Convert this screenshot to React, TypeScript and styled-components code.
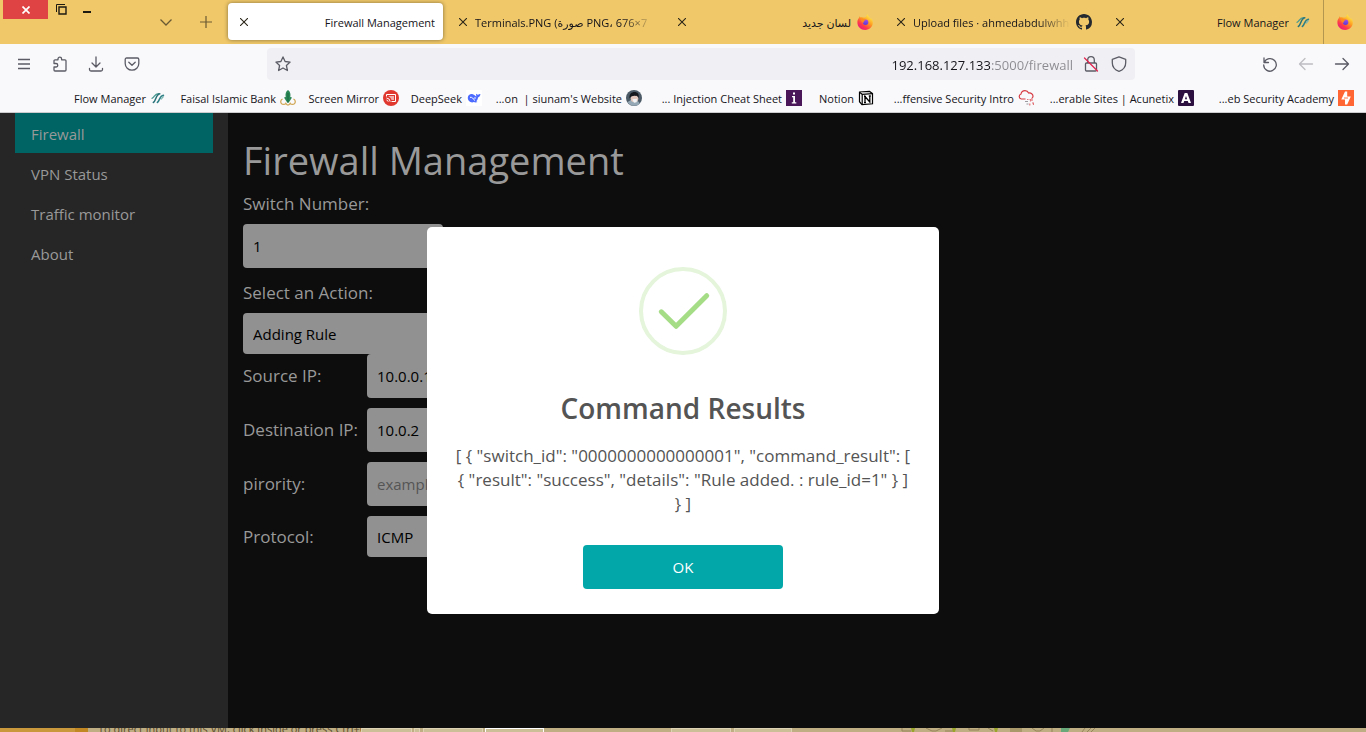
import React from "react";
import styled, { createGlobalStyle, css } from "styled-components";

const GlobalStyle = createGlobalStyle`
  *, *::before, *::after { box-sizing: border-box; }
  body {
    margin: 0;
    background: #0d0d0d;
    font-family: "Open Sans", "Noto Sans", "DejaVu Sans", sans-serif;
  }
  button, input, select { font: inherit; }
  a { color: inherit; text-decoration: none; }
  svg { display: block; flex: none; }
`;

const Page = styled.div`
  display: flex;
  flex-direction: column;
  min-height: 100vh;
`;

/* ---------- Browser chrome ---------- */

const TabStrip = styled.div`
  display: flex;
  height: 44px;
  background: #f0c869;
  color: #15141a;
`;

const WindowControls = styled.div`
  display: flex;
  align-items: flex-start;
  padding-left: 3px;
`;

const WindowButton = styled.button<{ $danger?: boolean }>`
  display: flex;
  align-items: center;
  justify-content: center;
  width: ${(p) => (p.$danger ? 45 : 26)}px;
  height: 19px;
  padding: 0;
  border: 0;
  background: ${(p) => (p.$danger ? "#e04343" : "transparent")};
`;

const StripActions = styled.div`
  display: flex;
  flex: 1;
  justify-content: flex-end;
  padding-right: 2px;
`;

const StripButton = styled.button`
  display: flex;
  align-items: center;
  justify-content: center;
  width: 40px;
  padding: 0;
  border: 0;
  background: transparent;
`;

const Tab = styled.div<{ $active?: boolean }>`
  display: flex;
  align-items: center;
  flex: 0 1 215px;
  min-width: 0;
  height: 37px;
  margin: 3px 4px 4px 0;
  padding: 0 8px 0 12px;
  border-radius: 4px;
  font-size: 11px;
  ${(p) =>
    p.$active &&
    css`
      background: #fff;
      box-shadow: 0 0 4px rgba(0, 0, 0, 0.45);
    `}
`;

const TabClose = styled.button`
  flex: none;
  width: 8px;
  height: 8px;
  padding: 0;
  border: 0;
  background: transparent;
`;

const TabTitle = styled.span<{ $fade?: boolean }>`
  flex: 1;
  min-width: 0;
  margin-left: 8px;
  padding-top: 2px;
  overflow: hidden;
  white-space: nowrap;
  text-align: ${(p) => (p.$fade ? "left" : "right")};
  ${(p) =>
    p.$fade &&
    css`
      mask-image: linear-gradient(to left, transparent, #000 32px);
    `}
`;

const TabIcon = styled.span`
  margin-left: 6px;
`;

const PinnedTab = styled.button`
  display: flex;
  align-items: center;
  justify-content: center;
  width: 43px;
  padding: 0;
  border: 0;
  border-left: 1px solid #b39650;
  background: transparent;
`;

const Toolbar = styled.div`
  display: flex;
  align-items: center;
  height: 40px;
  padding: 0 6px;
  background: #f9f9fb;
`;

const ToolButton = styled.button`
  display: flex;
  align-items: center;
  justify-content: center;
  width: 36px;
  height: 32px;
  padding: 0;
  border: 0;
  background: transparent;
  color: #5b5b66;

  &:disabled {
    color: #bdbdc2;
  }
`;

const UrlBar = styled.div`
  display: flex;
  align-items: center;
  flex: 1;
  height: 32px;
  margin: 0 117px;
  padding: 0 8px;
  border-radius: 4px;
  background: #f0f0f4;
  color: #5b5b66;
`;

/* The host is dark, the port and path (the last 83px) are grey. */
const UrlInput = styled.input`
  flex: 1;
  min-width: 0;
  margin: 0 10px;
  padding: 2px 0 0;
  border: 0;
  outline: 0;
  font-size: 13px;
  text-align: right;
  color: #15141a;
  background: linear-gradient(to left, #8a8a90 83px, #15141a 83px);
  background-clip: text;
  -webkit-background-clip: text;
  -webkit-text-fill-color: transparent;
`;

const UrlIcons = styled.div`
  display: flex;
  gap: 12px;
`;

const Bookmarks = styled.nav`
  display: flex;
  justify-content: flex-end;
  height: 29px;
  padding-right: 12px;
  border-bottom: 1px solid #cccccf;
  background: #f9f9fb;
  color: #15141a;
  font-size: 11px;
`;

const Bookmark = styled.a<{ $width: number }>`
  display: flex;
  align-items: center;
  justify-content: flex-end;
  gap: 4px;
  width: ${(p) => p.$width}px;
  white-space: pre;
`;

/* ---------- Web page ---------- */

const Body = styled.div`
  position: relative;
  display: flex;
  flex: 1;
`;

const Sidebar = styled.nav`
  flex: 0 0 228px;
  padding: 0 15px;
  background: #262626;
`;

const SideLink = styled.a<{ $active?: boolean }>`
  display: block;
  padding: 2px 16px 0;
  font-size: 15px;
  line-height: 38px;
  color: #999;
  background: ${(p) => (p.$active ? "#006464" : "transparent")};
`;

const Content = styled.main`
  flex: 1;
  padding: 23px 15px;
  background: #0d0d0d;
  color: #999;
`;

const Heading = styled.h1`
  margin: 0 0 8px;
  font-size: 38px;
  font-weight: 400;
  line-height: 48px;
`;

const Field = styled.div`
  width: 200px;
  margin-bottom: 13px;

  &:last-of-type {
    margin-bottom: 0;
  }
`;

const Label = styled.label`
  display: block;
  font-size: 17px;
  line-height: 24px;
  white-space: nowrap;
`;

const StackedLabel = styled(Label)`
  margin-bottom: 8px;
`;

const control = css`
  display: block;
  width: 100%;
  padding: 0 10px;
  border: 0;
  border-radius: 4px;
  background: #919191;
  color: #000;
  font-size: 15px;
`;

const TextInput = styled.input`
  ${control}
  height: 44px;

  &::placeholder {
    color: #555;
  }
`;

const Select = styled.select`
  ${control}
  appearance: none;
  height: 41px;
`;

const RuleForm = styled.form`
  display: grid;
  grid-template-columns: 124px 200px;
  row-gap: 10px;
  align-items: center;
`;

const Overlay = styled.div`
  position: absolute;
  inset: 0;
  display: flex;
  align-items: center;
  justify-content: center;
`;

const Dialog = styled.section`
  display: flex;
  flex-direction: column;
  align-items: center;
  width: 512px;
  max-width: 90%;
  padding: 40px 28px 25px;
  border-radius: 5px;
  background: #fff;
  color: #545454;
  text-align: center;
`;

const DialogTitle = styled.h2`
  margin: 33px 0 16px;
  font-size: 28px;
  font-weight: 600;
  line-height: 40px;
`;

const DialogText = styled.p`
  margin: 0 0 29px;
  font-size: 17px;
  line-height: 24px;
`;

const OkButton = styled.button`
  width: 200px;
  height: 44px;
  padding: 0;
  border: 0;
  border-radius: 4px;
  background: #02a7a9;
  color: #fff;
  font-size: 15px;
`;

/* ---------- Host status strip ---------- */

const StatusStrip = styled.footer`
  display: flex;
  height: 4px;
  overflow: hidden;
  background: #bfae84;
`;

const StripAccent = styled.div`
  width: 88px;
  background: linear-gradient(to right, #c9973c 75px, #c08722 75px);
`;

const StripHint = styled.div`
  width: 273px;
  height: 4px;
  padding-left: 10px;
  color: #5b4a2c;
  font-size: 11px;
  line-height: 1px;
  white-space: nowrap;
`;

const StripCell = styled.div<{ $width: number; $gap?: number; $bright?: boolean }>`
  width: ${(p) => p.$width}px;
  margin-left: ${(p) => p.$gap ?? 2}px;
  border: 1px solid ${(p) => (p.$bright ? "#fff" : "#ddd3b4")};
  border-bottom: 0;
  background: #cbbf98;
`;

const StripDrawing = styled.svg`
  margin-left: 108px;
`;

/* ---------- Icons ---------- */

const stroke = {
  fill: "none",
  stroke: "currentColor",
  strokeWidth: 1.3,
  strokeLinecap: "round" as const,
  strokeLinejoin: "round" as const,
};

const Icon = ({ children, size = 16 }: { children: React.ReactNode; size?: number }) => (
  <svg width={size} height={size} viewBox="0 0 16 16" {...stroke} aria-hidden="true">
    {children}
  </svg>
);

const CloseGlyph = () => (
  <svg width="8" height="8" viewBox="0 0 8 8" fill="none" stroke="#2b2518" strokeWidth="1.1">
    <path d="M0 0l8 8M8 0L0 8" />
  </svg>
);

const Firefox = () => (
  <svg width="16" height="16" viewBox="0 0 16 16">
    <defs>
      <linearGradient id="fx-body" x1="0.85" y1="0.1" x2="0.2" y2="1">
        <stop offset="0" stopColor="#fff04a" />
        <stop offset="0.4" stopColor="#ff9a1f" />
        <stop offset="0.7" stopColor="#ff3b47" />
        <stop offset="1" stopColor="#e3148b" />
      </linearGradient>
      <linearGradient id="fx-globe" x1="0.6" y1="0" x2="0.4" y2="1">
        <stop offset="0" stopColor="#a24bf0" />
        <stop offset="1" stopColor="#5a3ad2" />
      </linearGradient>
    </defs>
    <path
      fill="url(#fx-body)"
      d="M10.6.2c.2 1.500 1 2.100 2 3.200.500.500.900 1 1.200 1.600.200-.300.200-.700.100-1.100 1.200 1.200 1.900 2.900 1.900 4.700C15.800 12.800 12.400 16 8.200 16 3.800 16 .400 12.700.400 8.500c0-2 .6-3.400 1.700-4.700.100-.7.300-1.200.7-1.600.1.500.4.900.8 1.200.7-.2 1.500-.2 2.300.1C6.800 3.600 8 3.400 9 3c.3-1.100.8-2 1.600-2.800z"
    />
    <circle cx="8.600" cy="8.200" r="2.700" fill="url(#fx-globe)" />
    <path fill="#ff8a20" d="M3.500 5.200c1.300-.7 2.600-.6 3.700 0 .4.200 1 .3 1.700.4-.2.700-1 .9-1.700 1.300-.5.300-.5 1-.3 1.500-1 .3-2.100-.3-2.500-1.200-.2-.5-.5-1.400-.9-2z" />
  </svg>
);

const Github = () => (
  <svg width="16" height="16" viewBox="0 0 16 16" fill="#24292f">
    <path d="M8 0C3.580 0 0 3.580 0 8c0 3.540 2.290 6.530 5.470 7.590.4.070.55-.17.55-.38 0-.19-.010-.820-.010-1.490-2.010.370-2.530-.490-2.690-.940-.090-.230-.480-.940-.820-1.130-.280-.150-.680-.520-.010-.530.630-.010 1.080.580 1.230.820.720 1.210 1.870.870 2.330.660.070-.520.280-.870.510-1.070-1.780-.2-3.640-.89-3.640-3.950 0-.87.31-1.590.82-2.150-.08-.2-.36-1.020.08-2.120 0 0 .67-.21 2.200.820.640-.180 1.320-.270 2-.270s1.360.090 2 .270c1.530-1.040 2.200-.820 2.200-.820.440 1.100.160 1.920.080 2.120.510.560.820 1.270.820 2.150 0 3.070-1.870 3.750-3.650 3.950.290.250.540.730.540 1.480 0 1.070-.010 1.930-.010 2.200 0 .210.150.460.550.380A8.010 8.010 0 0 0 16 8c0-4.420-3.580-8-8-8z" />
  </svg>
);

const FlowMark = () => (
  <svg width="16" height="16" viewBox="0 0 16 16" fill="none" strokeLinecap="round">
    <path d="M2 8.300C4.800 7.500 4.200 3.800 8.500 3.600" stroke="#4b9a92" strokeWidth="1.300" />
    <path d="M3.300 12.500C6.300 11 5.500 4.600 9.800 3.800" stroke="#2a7378" strokeWidth="1.500" />
    <path d="M7.300 12.500c2.600-1.500 1.900-6.600 6.200-7.200" stroke="#2f8086" strokeWidth="1.500" />
    <path d="M11.500 9c.5-1 .9-1.800 2-2.200" stroke="#7fb8b2" strokeWidth="1.200" />
  </svg>
);

const FaisalMark = () => (
  <svg width="16" height="16" viewBox="0 0 16 16" fill="none">
    <path d="M8 0c2.300 1.500 2.800 4 2.300 7l1.700.5-2.500 4L8 13l-1.500-1.500-2.500-4L5.700 7C5.200 4 5.700 1.500 8 0z" fill="#2b8655" />
    <path d="M2.600 9a2.800 2.800 0 1 0 3.200 4.300c1 2.300 3.400 2.300 4.400 0A2.800 2.800 0 1 0 13.400 9" stroke="#d2a95a" strokeWidth="1.300" />
    <path d="M8 3v9.500" stroke="#1d6d43" strokeWidth="1.200" />
  </svg>
);

const MirrorMark = () => (
  <svg width="16" height="16" viewBox="0 0 16 16" fill="none">
    <circle cx="8" cy="8" r="8" fill="#e0382f" />
    <path d="M3.500 6.500v-2h9v7H8.500" stroke="#fff" strokeWidth="1" />
    <path d="M3.500 8a4 4 0 0 1 3.700 3.700M3.500 10a2 2 0 0 1 1.700 1.700" stroke="#fff" strokeWidth="1" />
    <path d="M5.500 6h5.500v4H8.500C8 8 7 7 5.500 6.500z" fill="#fff" opacity="0.6" />
  </svg>
);

const DeepSeekMark = () => (
  <svg width="16" height="16" viewBox="0 0 16 16">
    <path fill="#fff" d="M0 0h16v16H0z" />
    <path
      fill="#4d6bfe"
      d="M1.800 7.500c.2-2.800 2.800-4 5-3.300 1.600.5 2.300 1.500 3.500 2.200.2-1-.5-1.500-.3-2.700.8.400 1.300 1 2 1.100.9 0 1.400-.7 2.400-.7-.1 1.900-1 3-2.400 3.300-.2 1.700-.8 2.900-1.800 3.800l1.300.9c-1.500.6-2.700.4-3.700 0C4.800 13.200 1.600 11 1.800 7.500z"
    />
    <path d="M4 7.300c2-.4 3.500 1.200 4.600 3.300" fill="none" stroke="#fff" strokeWidth="1" />
    <circle cx="9" cy="8" r="0.800" fill="#fff" />
  </svg>
);

const AvatarMark = () => (
  <svg width="16" height="16" viewBox="0 0 16 16">
    <circle cx="8" cy="8" r="8" fill="#4b5a66" />
    <path d="M1.500 12A8 8 0 0 0 14 13.500L11 10H5z" fill="#94a8b5" />
    <circle cx="8.500" cy="8.500" r="3.800" fill="#e2c8bd" />
    <path d="M3.500 8.500C3 4 5.500 2 8.500 2s5 2 4 6c-1-2.500-2-2-4-2.300C6.500 6 5 6 3.500 8.500z" fill="#16191e" />
    <path d="M6.300 9.200l4.800-.4-.6 3.400-2.500.5z" fill="#f1f4f7" />
  </svg>
);

const InviMark = () => (
  <svg width="16" height="16" viewBox="0 0 16 16">
    <path fill="#4a1859" d="M0 0h16v16H0z" />
    <path fill="#fff" d="M7 2.600h2v2H7zM6 6h3v6.200h1.300v1.200H5.800v-1.200h1.400V7.200H6z" />
  </svg>
);

const NotionMark = () => (
  <svg width="16" height="16" viewBox="0 0 16 16" fill="#fff" stroke="#000">
    <path d="M1.500 2.200L11.500 1.400l3 2.200v10.200l-10.500.9-2.500-3z" strokeWidth="1.200" />
    <path d="M1.500 2.200L4.200 4.300l10.300-.7M4.200 4.300v10.400" strokeWidth="1.200" />
    <path d="M7 12.500v-6l4.800 5.500V6M6 6.400h2M10.800 6h2M6 12.600h2" fill="none" strokeWidth="1.300" />
  </svg>
);

const CloudMark = () => (
  <svg width="16" height="16" viewBox="0 0 16 16" fill="none" stroke="#d63a42" strokeWidth="1.200">
    <path d="M7.500 9H3.200A2.600 2.600 0 0 1 3 4c.4-2.200 2-3.300 4-3.300 1.700 0 3 .9 3.600 2.300C13 2.700 15.200 4 15 6.500c-.1 1-.7 1.700-1.500 2" />
    <path d="M7 11.500h3M8.500 14h2" stroke="#9a9a9f" />
    <path d="M9 9.500h1.500M11.500 9.500h1v2M14 9v2M11.800 13.500v2M14 13h1.500v2" stroke="#e2777c" />
  </svg>
);

const AcunetixMark = () => (
  <svg width="16" height="16" viewBox="0 0 16 16">
    <rect width="16" height="16" rx="1" fill="#2b1040" />
    <path fill="#fff" fillRule="evenodd" d="M6.700 3h2.600L13 13h-2.500l-.7-2H6.200l-.7 2H3zm1.300 3L6.900 9.200h2.200z" />
  </svg>
);

const PortSwiggerMark = () => (
  <svg width="16" height="16" viewBox="0 0 16 16">
    <path fill="#ff6633" d="M0 0h16v16H0z" />
    <path fill="#fff" d="M7 1.500h2.200v5h3.600L9.200 14.500H7V9.500H3.300z" />
    <path d="M6 8h4" stroke="#ff6633" strokeWidth="0.900" />
  </svg>
);

const bookmarks = [
  { text: "Flow Manager", width: 108, icon: <FlowMark /> },
  { text: "Faisal Islamic Bank", width: 130, icon: <FaisalMark /> },
  { text: "Screen Mirror", width: 103, icon: <MirrorMark /> },
  { text: "DeepSeek", width: 83, icon: <DeepSeekMark /> },
  { text: "...on  | siunam's Website", width: 160, icon: <AvatarMark /> },
  { text: "... Injection Cheat Sheet", width: 160, icon: <InviMark /> },
  { text: "Notion", width: 72, icon: <NotionMark /> },
  { text: "...ffensive Security Intro", width: 160, icon: <CloudMark /> },
  { text: "...erable Sites | Acunetix", width: 160, icon: <AcunetixMark /> },
  { text: "...eb Security Academy", width: 160, icon: <PortSwiggerMark /> },
];

const tabs = [
  { title: "Firewall Management", active: true },
  { title: "Terminals.PNG (صورة PNG، 676×7", fade: true },
  { title: "لسان جديد", icon: <Firefox /> },
  { title: "Upload files · ahmedabdulwhh", fade: true, icon: <Github /> },
  { title: "Flow Manager", icon: <FlowMark /> },
];

const BrowserChrome = () => (
  <header>
    <TabStrip>
      <WindowControls>
        <WindowButton $danger aria-label="Close window">
          <svg width="8" height="8" viewBox="0 0 8 8" stroke="#fff" strokeWidth="1.700">
            <path d="M.5.5l7 7M7.500.5l-7 7" />
          </svg>
        </WindowButton>
        <WindowButton aria-label="Restore window">
          <svg width="11" height="11" viewBox="0 0 11 11" fill="none" stroke="#1d1a12">
            <path d="M.5 8V.5H9" />
            <path d="M3 3h7v7H3z" strokeWidth="1.400" />
          </svg>
        </WindowButton>
        <WindowButton aria-label="Minimise window">
          <svg width="8" height="8" viewBox="0 0 8 8" fill="#1d1a12">
            <path d="M0 5h8v2H0z" />
          </svg>
        </WindowButton>
      </WindowControls>
      <StripActions>
        <StripButton aria-label="List all tabs">
          <svg width="12" height="7" viewBox="0 0 12 7" fill="none" stroke="#6a5a33" strokeWidth="1.300">
            <path d="M.5.5L6 6 11.500.5" />
          </svg>
        </StripButton>
        <StripButton aria-label="New tab">
          <svg width="12" height="12" viewBox="0 0 12 12" stroke="#6a5a33" strokeWidth="1.200">
            <path d="M6 0v12M0 6h12" />
          </svg>
        </StripButton>
      </StripActions>
      {tabs.map((tab) => (
        <Tab key={tab.title} $active={tab.active}>
          <TabClose aria-label="Close tab">
            <CloseGlyph />
          </TabClose>
          <TabTitle $fade={tab.fade}>{tab.title}</TabTitle>
          {tab.icon && <TabIcon>{tab.icon}</TabIcon>}
        </Tab>
      ))}
      <PinnedTab aria-label="Firefox">
        <Firefox />
      </PinnedTab>
    </TabStrip>

    <Toolbar>
      <ToolButton aria-label="Menu">
        <Icon><path d="M2 3.500h12M2 8h12M2 12.500h12" strokeLinecap="butt" /></Icon>
      </ToolButton>
      <ToolButton aria-label="Extensions">
        <Icon>
          <path d="M2 5.500V4.800a1 1 0 0 1 1-1h3V3a1.800 1.800 0 0 1 3.600 0v.8h3.400a1 1 0 0 1 1 1v9.200a1 1 0 0 1-1 1H3a1 1 0 0 1-1-1V11h2a1.700 1.700 0 0 0 0-3.500H2z" />
        </Icon>
      </ToolButton>
      <ToolButton aria-label="Downloads">
        <Icon><path d="M8 1v9.500M4 7l4 4 4-4M1.500 12.500v1a1.500 1.500 0 0 0 1.500 1.500h10a1.500 1.500 0 0 0 1.500-1.500v-1" /></Icon>
      </ToolButton>
      <ToolButton aria-label="Save to Pocket">
        <Icon><path d="M2.600 2h10.800a1.400 1.400 0 0 1 1.400 1.400v4a6.800 6.800 0 0 1-13.600 0v-4A1.400 1.400 0 0 1 2.600 2zM4.800 6.200L8 9.300l3.200-3.100" /></Icon>
      </ToolButton>
      <UrlBar>
        <Icon>
          <path d="M8 .9l2.100 4.600 5 .6-3.700 3.400 1 5L8 12l-4.400 2.500 1-5L.9 6.100l5-.6z" />
        </Icon>
        <UrlInput aria-label="Address" defaultValue="192.168.127.133:5000/firewall" />
        <UrlIcons>
          <Icon>
            <path d="M3.500 7h9a1 1 0 0 1 1 1v6a1 1 0 0 1-1 1h-9a1 1 0 0 1-1-1V8a1 1 0 0 1 1-1zM4.700 7V4a3.300 3.300 0 0 1 6.600 0v3" />
            <path d="M1.500 2l13 13" stroke="#e22850" />
          </Icon>
          <Icon><path d="M8 .8l6.700 2.500v3.500c0 4-2.500 7.200-6.700 8.500C3.800 14 1.300 10.800 1.300 6.800V3.300z" /></Icon>
        </UrlIcons>
      </UrlBar>
      <ToolButton aria-label="Reload">
        <Icon><path d="M2 2v4.500h4.500M2.300 6.200A6.300 6.300 0 1 1 1.700 9" /></Icon>
      </ToolButton>
      <ToolButton aria-label="Forward" disabled>
        <Icon><path d="M14.500 8h-13M7 2.500L1.500 8 7 13.500" /></Icon>
      </ToolButton>
      <ToolButton aria-label="Back">
        <Icon><path d="M1.500 8h13M9 2.500L14.500 8 9 13.500" /></Icon>
      </ToolButton>
    </Toolbar>

    <Bookmarks aria-label="Bookmarks">
      {bookmarks.map((b) => (
        <Bookmark key={b.text} href="#" $width={b.width}>
          {b.text}
          {b.icon}
        </Bookmark>
      ))}
    </Bookmarks>
  </header>
);

const SuccessMark = () => (
  <svg width="88" height="88" viewBox="0 0 88 88" fill="none">
    <circle cx="44" cy="44" r="42" stroke="#e4f5db" strokeWidth="4" />
    <path d="M22.300 44.800L37.100 59.300 67.700 28.700" stroke="#a5dc86" strokeWidth="5" strokeLinecap="round" strokeLinejoin="round" />
  </svg>
);

export default function App() {
  return (
    <Page>
      <GlobalStyle />
      <BrowserChrome />
      <Body>
        <Sidebar aria-label="Sections">
          <SideLink href="#" $active>Firewall</SideLink>
          <SideLink href="#">VPN Status</SideLink>
          <SideLink href="#">Traffic monitor</SideLink>
          <SideLink href="#">About</SideLink>
        </Sidebar>
        <Content>
          <Heading>Firewall Management</Heading>
          <Field>
            <StackedLabel htmlFor="switch">Switch Number:</StackedLabel>
            <TextInput id="switch" defaultValue="1" />
          </Field>
          <Field>
            <StackedLabel htmlFor="action">Select an Action:</StackedLabel>
            <Select id="action">
              <option>Adding Rule</option>
            </Select>
          </Field>
          <RuleForm>
            <Label htmlFor="source">Source IP:</Label>
            <TextInput id="source" defaultValue="10.0.0.1" />
            <Label htmlFor="destination">Destination IP:</Label>
            <TextInput id="destination" defaultValue="10.0.2" />
            <Label htmlFor="priority">pirority:</Label>
            <TextInput id="priority" placeholder="example: 1" />
            <Label htmlFor="protocol">Protocol:</Label>
            <Select id="protocol">
              <option>ICMP</option>
            </Select>
          </RuleForm>
        </Content>
        <Overlay>
          <Dialog role="dialog" aria-labelledby="result-title">
            <SuccessMark />
            <DialogTitle id="result-title">Command Results</DialogTitle>
            <DialogText>
              {'[ { "switch_id": "0000000000000001", "command_result": [ { "result": "success", "details": "Rule added. : rule_id=1" } ] } ]'}
            </DialogText>
            <OkButton>OK</OkButton>
          </Dialog>
        </Overlay>
      </Body>
      <StatusStrip>
        <StripAccent />
        <StripHint>To direct input to this VM, click inside or press Ctrl+G.</StripHint>
        <StripCell $width={51} $gap={0} />
        <StripCell $width={6} />
        <StripCell $width={60} $gap={3} />
        <StripCell $width={59} $bright />
        <StripCell $width={60} $gap={127} />
        <StripCell $width={58} $gap={3} />
        <StripDrawing width="200" height="4" viewBox="0 0 200 4" fill="none" stroke="#96835a">
          <path d="M2 0v3h9M26 0l6 3h4l6-3M45 3h9M69 0v2h10V0M88 0l5 3M132 0l4 3h4l4-3M152 0v4" />
          <path d="M187 4l4-4M191 4l4-4M182 4l3-4" />
          <path d="M110 0h12v4h-12z" fill="#a99869" stroke="none" />
          <path d="M161 0h9l-2 4h-7z" fill="#69a878" stroke="none" />
          <path d="M11 0h4l-1 4h-2zM52 0h4l-1 4h-2zM94 0h4l-1 4h-2z" fill="#9aa52c" stroke="none" />
        </StripDrawing>
      </StatusStrip>
    </Page>
  );
}
